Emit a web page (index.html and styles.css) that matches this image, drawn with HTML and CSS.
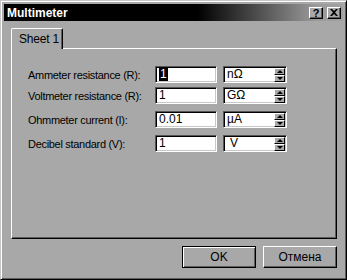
FILE: index.html
```html
<!DOCTYPE html>
<html lang="en">
<head>
  <meta charset="UTF-8">
  <title>Multimeter</title>
  <link rel="stylesheet" href="styles.css">
</head>
<body>
  <div class="dialog">
    <!-- Titelleiste -->
    <div class="titlebar">
      <span class="title">Multimeter</span>
      <div class="title-buttons">
        <span class="tbtn">?</span>
        <span class="tbtn tbtn-close">
          <svg width="8" height="7" viewBox="0 0 8 7"><path d="M0 0h2l2 2 2-2h2L5 3.5 8 7H6L4 5 2 7H0l3-3.5z" fill="#000"/></svg>
        </span>
      </div>
    </div>

    <!-- Registerkarte -->
    <div class="tabs">
      <div class="tab">Sheet 1</div>
    </div>
    <div class="panel">
      <div class="row">
        <label class="label">Ammeter resistance (R):</label>
        <div class="field"><span class="sel">1</span></div>
        <div class="combo"><span class="unit">nΩ</span><span class="spin"><i class="up"></i><i class="down"></i></span></div>
      </div>
      <div class="row row-close">
        <label class="label">Voltmeter resistance (R):</label>
        <div class="field">1</div>
        <div class="combo"><span class="unit">GΩ</span><span class="spin"><i class="up"></i><i class="down"></i></span></div>
      </div>
      <div class="row">
        <label class="label">Ohmmeter current (I):</label>
        <div class="field">0.01</div>
        <div class="combo"><span class="unit">µA</span><span class="spin"><i class="up"></i><i class="down"></i></span></div>
      </div>
      <div class="row">
        <label class="label">Decibel standard (V):</label>
        <div class="field">1</div>
        <div class="combo"><span class="unit unit-v">V</span><span class="spin"><i class="up"></i><i class="down"></i></span></div>
      </div>
    </div>

    <!-- Knöpfe unten -->
    <div class="footer">
      <button class="btn btn-default">OK</button>
      <button class="btn">Отмена</button>
    </div>
  </div>
</body>
</html>
```

FILE: styles.css
```css
/* Grundlegendes Reset */
html, body {
  margin: 0;
  padding: 0;
  background: #a8a8a8;
  font-family: "Liberation Sans", Arial, sans-serif;
}

/* Fensterrahmen */
.dialog {
  width: 347px;
  height: 280px;
  box-sizing: border-box;
  background: #a8a8a8;
  border: 1px solid;
  border-color: #c8c8c8 #000 #000 #c8c8c8;
  box-shadow: inset 1px 1px 0 #fff, inset -1px -1px 0 #5c5c5c;
  padding: 3px;
  display: flex;
  flex-direction: column;
}

.titlebar {
  height: 17px;
  display: flex;
  align-items: center;
  justify-content: space-between;
  padding: 0 2px 0 3px;
  background: linear-gradient(to right, #000 0%, #000 57%, #9a9a9a 92%, #a0a0a0 100%);
}

.title {
  color: #fff;
  font-weight: bold;
  font-size: 12px;
}

.title-buttons {
  display: flex;
  gap: 4px;
}

.tbtn {
  width: 14px;
  height: 12px;
  box-sizing: border-box;
  background: #a8a8a8;
  border: 1px solid;
  border-color: #fff #000 #000 #fff;
  box-shadow: inset -1px -1px 0 #5c5c5c;
  font-size: 11px;
  font-weight: bold;
  line-height: 10px;
  text-align: center;
  display: flex;
  align-items: center;
  justify-content: center;
}

/* Registerkarte */
.tabs {
  display: flex;
  margin: 7px 0 0 7px;
}

.tab {
  width: 52px;
  height: 21px;
  box-sizing: border-box;
  border: 1px solid;
  border-color: #fff #000 transparent #fff;
  border-bottom: none;
  border-radius: 2px 2px 0 0;
  box-shadow: inset -1px 0 0 #5c5c5c;
  font-size: 12px;
  padding: 3px 0 0 7px;
  letter-spacing: -0.2px;
  position: relative;
  z-index: 1;
  margin-bottom: -1px;
  background: #a8a8a8;
}

.panel {
  height: 191px;
  box-sizing: border-box;
  margin: 0 6px 0 7px;
  border: 1px solid;
  border-color: #fff #000 #000 #fff;
  box-shadow: inset -1px -1px 0 #5c5c5c;
  padding: 17px 0 0 16px;
  display: flex;
  flex-direction: column;
  gap: 7px;
}

.row {
  display: flex;
  align-items: center;
  height: 17px;
}

.row-close {
  margin-top: -3px;
}

.label {
  width: 127px;
  font-size: 11px;
  letter-spacing: -0.3px;
  color: #000;
}

/* Eingabefelder, eingelassen */
.field, .combo {
  height: 17px;
  box-sizing: border-box;
  background: #fff;
  border: 1px solid;
  border-color: #555 #fff #fff #555;
  box-shadow: inset 1px 1px 0 #000, inset -1px -1px 0 #c8c8c8;
  font-size: 12px;
  line-height: 15px;
}

.field {
  width: 62px;
  padding-left: 3px;
  margin-right: 6px;
}

.sel {
  background: #000;
  color: #fff;
  padding: 0 1px;
}

.combo {
  width: 64px;
  display: flex;
  justify-content: space-between;
  padding: 0 1px 0 3px;
}

.unit-v {
  padding-left: 3px;
}

.spin {
  width: 11px;
  display: flex;
  flex-direction: column;
  padding-top: 1px;
}

.spin i {
  height: 7px;
  box-sizing: border-box;
  background: #a8a8a8;
  border: 1px solid;
  border-color: #fff #000 #000 #fff;
  position: relative;
}

.spin i::after {
  content: "";
  position: absolute;
  left: 2px;
  border-left: 3px solid transparent;
  border-right: 3px solid transparent;
}

.spin .up::after {
  top: 1px;
  border-bottom: 3px solid #000;
}

.spin .down::after {
  top: 1px;
  border-top: 3px solid #000;
}

/* Knöpfe */
.footer {
  display: flex;
  justify-content: flex-end;
  gap: 7px;
  margin: 7px 6px 0 0;
}

.btn {
  width: 74px;
  height: 22px;
  box-sizing: border-box;
  background: #a8a8a8;
  border: 1px solid;
  border-color: #fff #000 #000 #fff;
  box-shadow: inset -1px -1px 0 #5c5c5c;
  font-family: "Liberation Sans", Arial, sans-serif;
  font-size: 12px;
  color: #000;
  padding: 0;
}

.btn-default {
  border: 1px solid #000;
  box-shadow: inset 1px 1px 0 #fff, inset -1px -1px 0 #5c5c5c;
}
```
